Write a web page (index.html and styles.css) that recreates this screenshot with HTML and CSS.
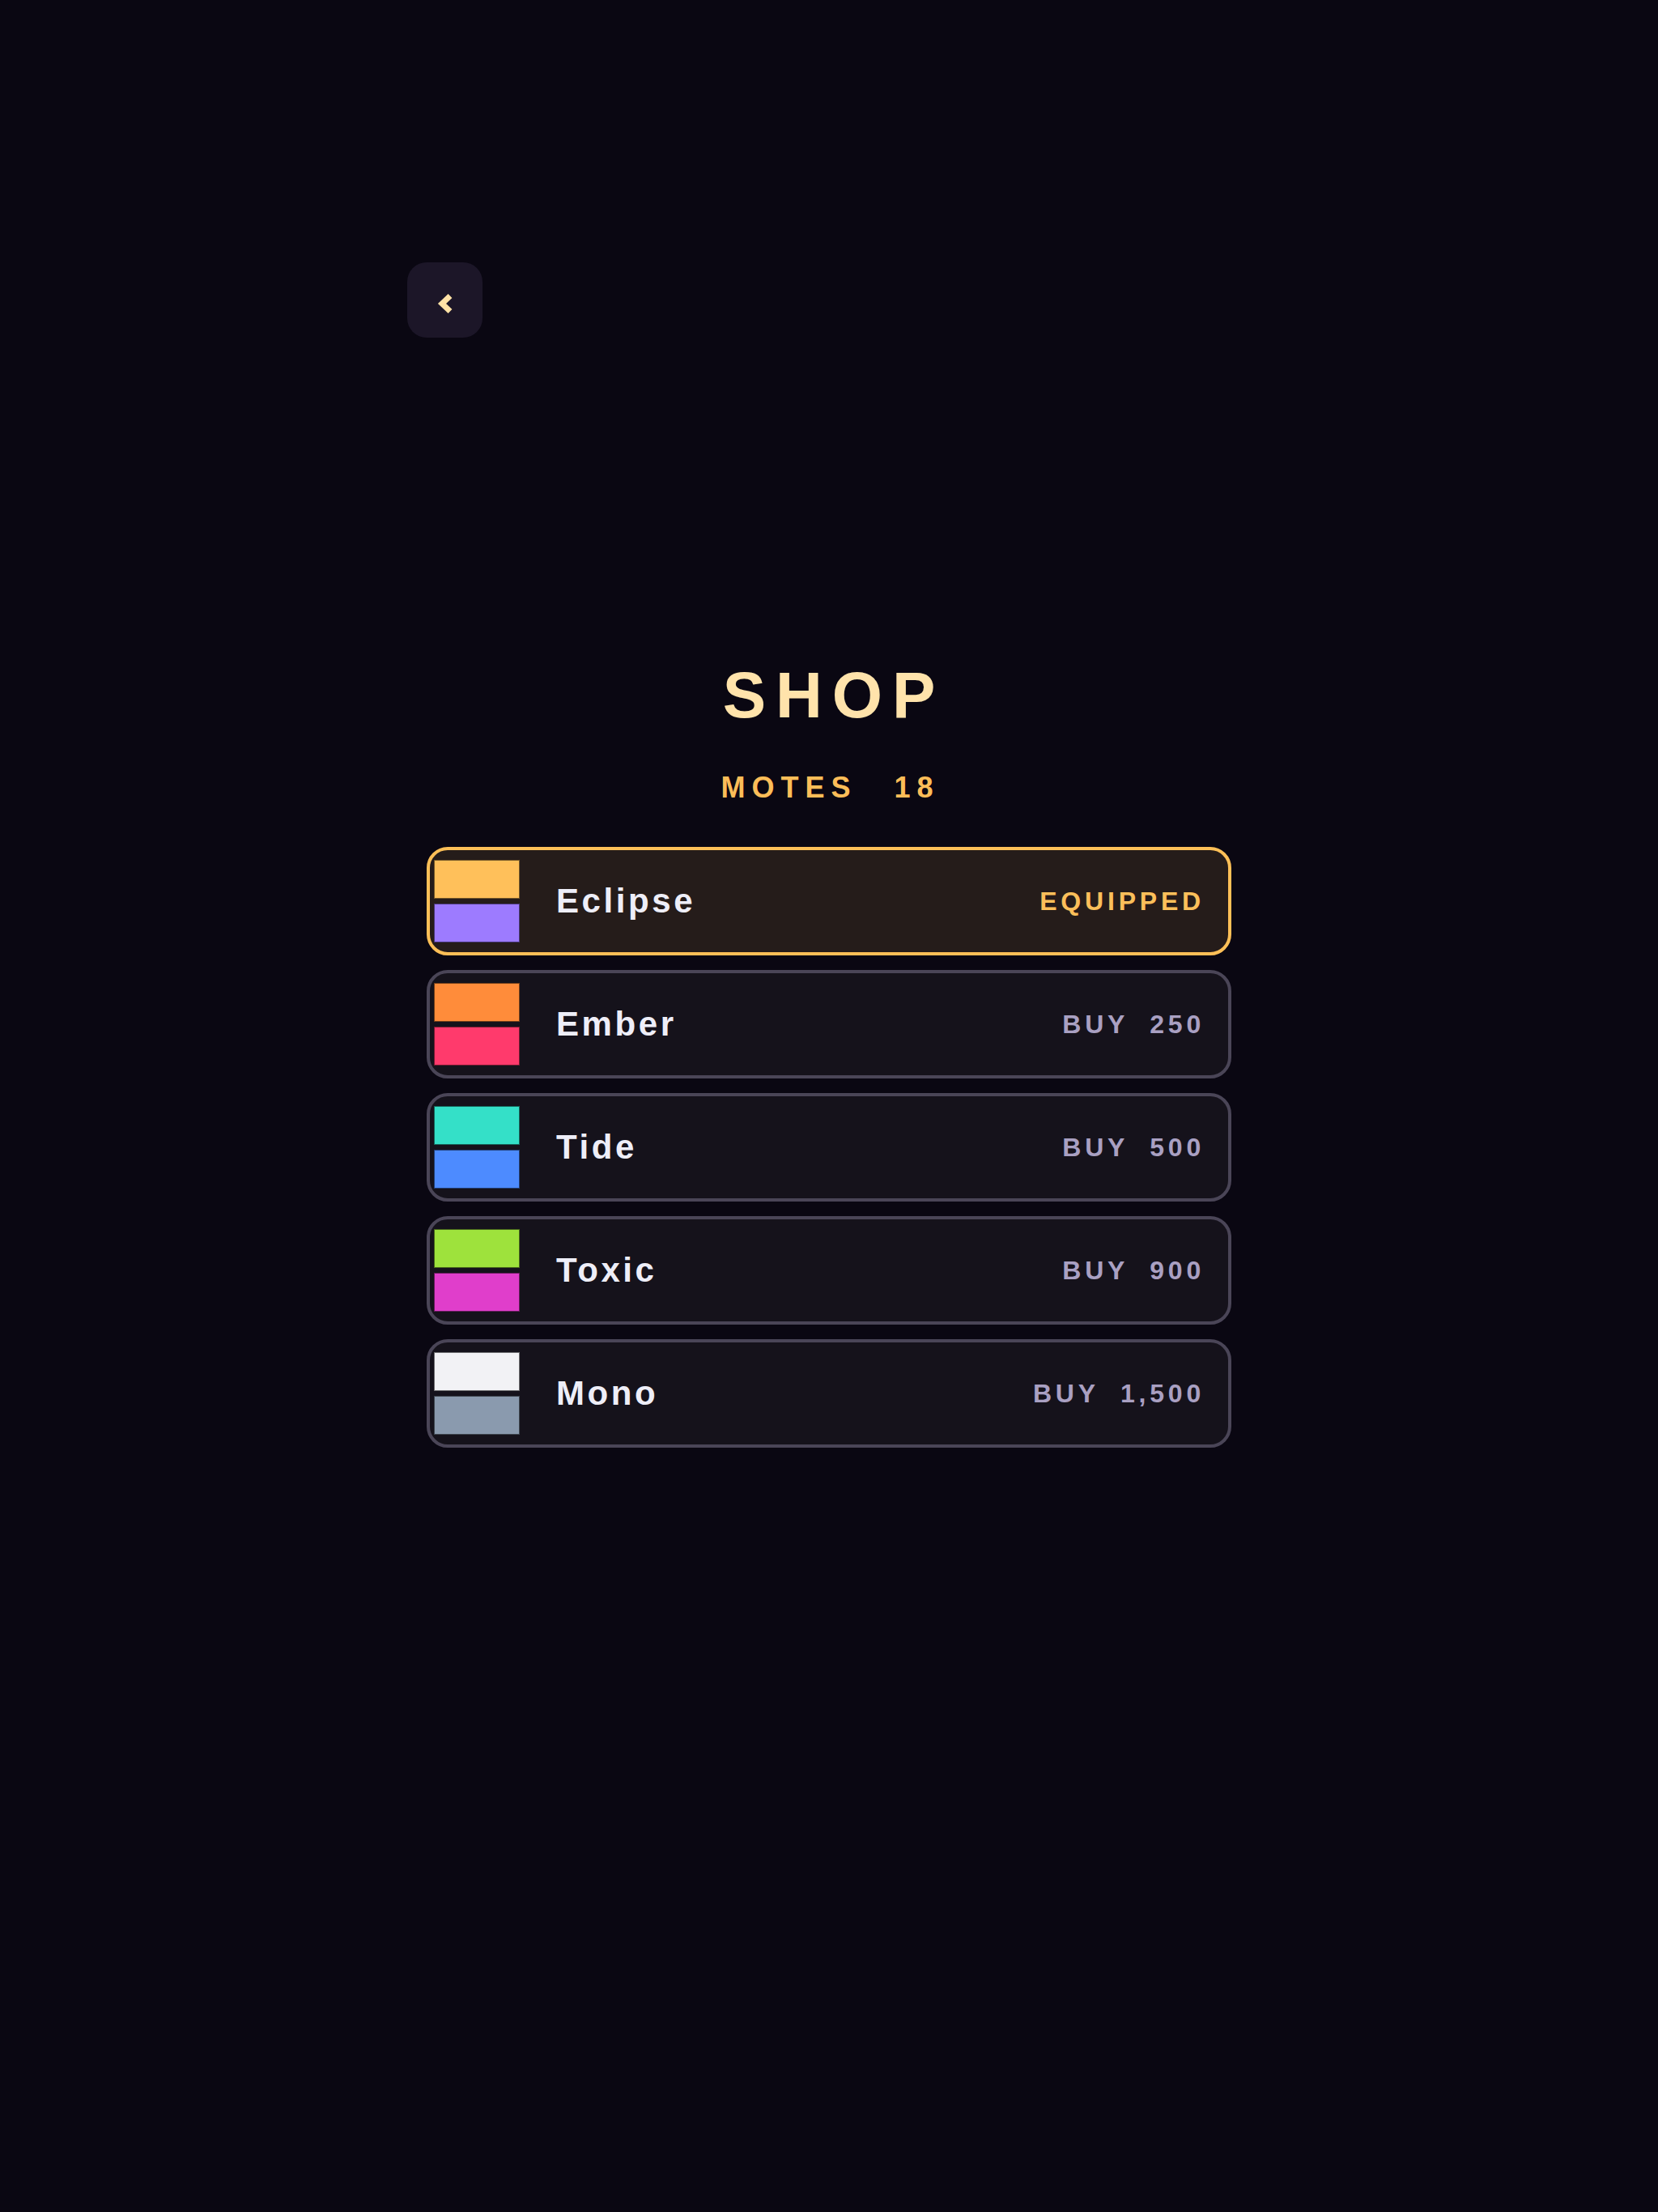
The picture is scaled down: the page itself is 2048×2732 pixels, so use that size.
FILE: index.html
```html
<!DOCTYPE html>
<html lang="en">
<head>
<meta charset="utf-8">
<title>Shop</title>
<link rel="stylesheet" href="styles.css">
</head>
<body>
<div class="app">
  <button class="back" aria-label="Back">
    <svg class="back-icon" width="93" height="93" viewBox="0 0 93 93"><polyline points="53,41.5 43,51 53,60.5" fill="none" stroke="#ffe2a6" stroke-width="7" stroke-linejoin="miter" stroke-linecap="butt"/></svg>
  </button>
  <h1 class="title">SHOP</h1>
  <div class="motes"><span>MOTES</span><span>18</span></div>
  <ul class="list">
    <li class="card card-equipped">
      <div class="swatch"><span class="sw sw-eclipse-a"></span><span class="sw sw-eclipse-b"></span></div>
      <span class="name">Eclipse</span>
      <span class="status status-equipped">EQUIPPED</span>
    </li>
    <li class="card">
      <div class="swatch"><span class="sw sw-ember-a"></span><span class="sw sw-ember-b"></span></div>
      <span class="name">Ember</span>
      <span class="status"><span>BUY</span><span>250</span></span>
    </li>
    <li class="card">
      <div class="swatch"><span class="sw sw-tide-a"></span><span class="sw sw-tide-b"></span></div>
      <span class="name">Tide</span>
      <span class="status"><span>BUY</span><span>500</span></span>
    </li>
    <li class="card">
      <div class="swatch"><span class="sw sw-toxic-a"></span><span class="sw sw-toxic-b"></span></div>
      <span class="name">Toxic</span>
      <span class="status"><span>BUY</span><span>900</span></span>
    </li>
    <li class="card">
      <div class="swatch"><span class="sw sw-mono-a"></span><span class="sw sw-mono-b"></span></div>
      <span class="name">Mono</span>
      <span class="status"><span>BUY</span><span>1,500</span></span>
    </li>
  </ul>
</div>
</body>
</html>
```
FILE: styles.css
```css
* { box-sizing: border-box; }
html, body {
  margin: 0;
  padding: 0;
  background: #0a0712;
  min-height: 2732px;
  font-family: "Liberation Sans", Arial, sans-serif;
}
.app {
  width: 1042px;
  margin: 0 auto;
  padding-top: 324px;
  display: flex;
  flex-direction: column;
}
.back {
  width: 93px;
  height: 93px;
  border: none;
  border-radius: 24px;
  background: #1c1628;
  padding: 0;
  display: block;
}
.back-icon { display: block; }
.title {
  margin: 402px 0 0;
  text-align: center;
  font-size: 80px;
  line-height: 1;
  font-weight: 700;
  letter-spacing: 12px;
  padding-left: 12px;
  color: #ffe3ab;
}
.motes {
  margin-top: 56px;
  display: flex;
  justify-content: center;
  gap: 46px;
  font-size: 36px;
  line-height: 1;
  font-weight: 700;
  letter-spacing: 8px;
  padding-left: 3px;
  color: #fcbd58;
}
.list {
  list-style: none;
  margin: 55px 0 0;
  padding: 0 24px;
  display: flex;
  flex-direction: column;
  gap: 18px;
}
.card {
  height: 134px;
  border: 4px solid #4a4557;
  border-radius: 26px;
  background: #15121b;
  padding: 12px 29px 12px 5px;
  display: flex;
  align-items: center;
}
.card-equipped {
  border-color: #fcbf57;
  background: #251c1a;
}
.swatch {
  width: 106px;
  display: flex;
  flex-direction: column;
  gap: 6px;
}
.sw {
  display: block;
  height: 48px;
  border: 1px solid rgba(0, 0, 0, 0.55);
}
.sw-eclipse-a { background: #ffc05a; }
.sw-eclipse-b { background: #9d7bff; }
.sw-ember-a { background: #ff8c3a; }
.sw-ember-b { background: #ff3a6c; }
.sw-tide-a { background: #34e0c8; }
.sw-tide-b { background: #4d8bff; }
.sw-toxic-a { background: #9ee23c; }
.sw-toxic-b { background: #e03ecb; }
.sw-mono-a { background: #f2f2f5; }
.sw-mono-b { background: #8a9aae; }
.name {
  margin-left: 45px;
  font-size: 42px;
  font-weight: 700;
  letter-spacing: 3.6px;
  color: #eeeef8;
}
.status {
  margin-left: auto;
  display: flex;
  gap: 26px;
  font-size: 32px;
  font-weight: 700;
  letter-spacing: 4.8px;
  color: #a9a0c2;
}
.status-equipped { color: #fbbf5a; }
```
